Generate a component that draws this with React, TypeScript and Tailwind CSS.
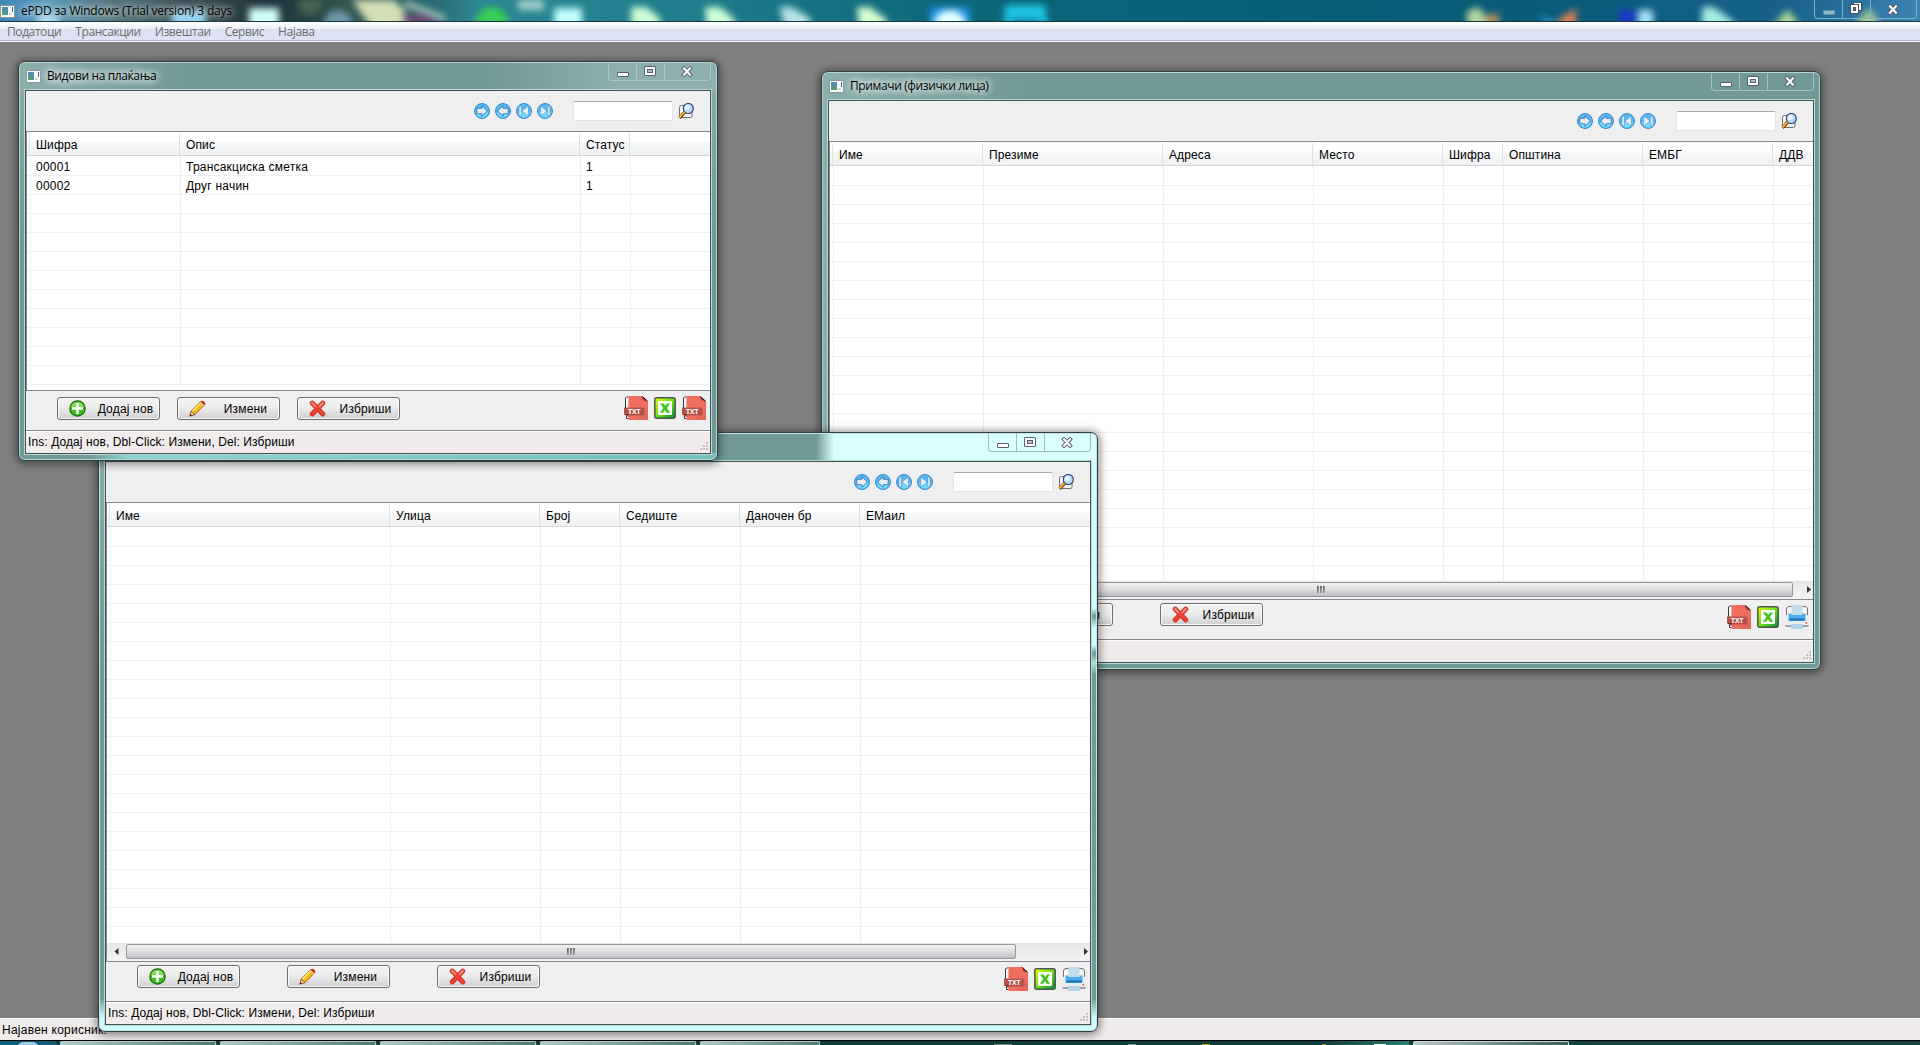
import type { ReactNode } from "react";

type Column = { label: string; width: string };

const TITLE_FONT = "font-['Open_Sans','Noto_Sans',sans-serif]";
const UI_FONT = "font-['Liberation_Sans',Arial,sans-serif]";

function AppIcon() {
  return (
    <svg width="15" height="13" viewBox="0 0 15 13" className="shrink-0">
      <rect x=".5" y=".5" width="14" height="12" fill="#fbfbfb" stroke="#8f979b" />
      <rect x="2" y="2" width="6" height="8" fill="#4f8fa8" />
      <path d="M2 10V5l6 5z" fill="#57a06a" />
      <rect x="9" y="8" width="3" height="2" fill="#cfd2d6" />
      <rect x="12" y="2" width="1" height="5" fill="#2a5f9a" />
    </svg>
  );
}

function MinimizeGlyph({ faded }: { faded?: boolean }) {
  return (
    <svg width="12" height="5" viewBox="0 0 12 5" className="mt-1.5">
      <rect x=".5" y=".5" width="11" height="4" rx=".5" fill={faded ? "#8fb9c6" : "#fff"} stroke={faded ? "#5f93a5" : "#575d6b"} />
    </svg>
  );
}

function MaximizeGlyph() {
  return (
    <svg width="12" height="10" viewBox="0 0 12 10" className="-ml-px">
      <rect x=".5" y=".5" width="11" height="9" rx=".5" fill="#fff" stroke="#575d6b" />
      <rect x="3.5" y="3.5" width="5" height="3" fill="#a9c4c4" stroke="#575d6b" />
    </svg>
  );
}

function RestoreGlyph() {
  return (
    <svg width="12" height="12" viewBox="0 0 12 12" className="-mt-[3px] -ml-[2px]">
      <rect x="3.5" y=".5" width="8" height="8" fill="#fff" stroke="#474f60" />
      <rect x=".5" y="2.5" width="8" height="9" fill="#fff" stroke="#474f60" />
      <rect x="3.5" y="5.5" width="2" height="3" fill="#4f8aa8" stroke="#474f60" />
    </svg>
  );
}

function CloseGlyph() {
  return (
    <svg width="12" height="11" viewBox="0 0 12 11" className="-ml-px">
      <path d="M3 2.300l6 6.400M9 2.300l-6 6.400" stroke="#575d6b" strokeWidth="4" strokeLinecap="square" />
      <path d="M3 2.300l6 6.400M9 2.300l-6 6.400" stroke="#fff" strokeWidth="2.1" strokeLinecap="square" />
    </svg>
  );
}

function CaptionButtons({ tone, restore }: { tone: string; restore?: boolean }) {
  return (
    <div className={`flex h-[19px] w-[103px] rounded-b-[4px] border border-t-0 ${tone}`}>
      <div className={`flex w-7 items-center justify-center border-r ${tone}`}>
        <MinimizeGlyph faded={restore} />
      </div>
      <div className={`flex w-7 items-center justify-center border-r ${tone}`}>
        {restore ? <RestoreGlyph /> : <MaximizeGlyph />}
      </div>
      <div className="flex flex-1 items-center justify-center">
        <CloseGlyph />
      </div>
    </div>
  );
}

function NavIcon({ kind }: { kind: "next" | "prev" | "first" | "last" }) {
  const flip = kind === "prev" || kind === "first";
  return (
    <svg width="16" height="16" viewBox="0 0 16 16">
      <circle cx="8" cy="8" r="7.5" fill="#58b8f0" stroke="#3a8ad2" strokeWidth="1" />
      <path d="M2 9a6 5.6 0 0 0 12 0z" fill="#6fdcff" />
      <g transform={flip ? "translate(16 0) scale(-1 1)" : undefined}>
        {kind === "next" || kind === "prev" ? (
          <path d="M2.800 5.300h5V2.800L13.400 8l-5.600 5.200v-2.500h-5z" fill="#e9edf1" stroke="#2a68b4" strokeWidth=".8" />
        ) : (
          <g fill="#e9edf1" stroke="#4a92d4" strokeWidth=".6">
            <path d="M3.600 3L10.200 8l-6.600 5z" />
            <path d="M10.600 3.200h2.400v9.600h-2.400z" />
          </g>
        )}
      </g>
    </svg>
  );
}

function SearchIcon() {
  return (
    <svg width="16" height="16" viewBox="0 0 16 16">
      <path d="M3.500 2.500H12q2 0 2 2V13q0 1.500-1.500 1.500h-9Q1.500 14.500 1.500 12.500v-8q0-2 2-2z" fill="#f4f4f4" stroke="#707070" />
      <circle cx="10.300" cy="5.500" r="5" fill="#b4d9f8" stroke="#29406f" strokeWidth="1.100" />
      <circle cx="9.400" cy="4.400" r="2.600" fill="#e6f5ff" />
      <path d="M6.800 9.200L1.500 14.800" stroke="#6b3c10" strokeWidth="3.200" />
      <path d="M6.600 9L1.400 14.400" stroke="#ffb53a" strokeWidth="1.800" />
    </svg>
  );
}

function AddIcon() {
  return (
    <svg width="17" height="17" viewBox="0 0 17 17">
      <circle cx="8.5" cy="8.5" r="7.7" fill="#3dbb18" stroke="#1d6a10" strokeWidth="1.2" />
      <path d="M2.2 7a6.4 6 0 0 1 12.6 0q-6 3-12.6 0z" fill="#7fdc5a" />
      <path d="M7.200 3h2.600v4.200H14v2.600H9.800V14H7.200V9.800H3V7.200h4.200z" fill="#fff" />
    </svg>
  );
}

function EditIcon() {
  return (
    <svg width="17" height="17" viewBox="0 0 17 17">
      <path d="M1 16l1.3-5L12 1.3l3.7 3.4L6 14.5z" fill="#f7b912" stroke="#9a5a0c" strokeWidth=".9" />
      <path d="M3.4 11.4L11.8 3" stroke="#ffe96a" strokeWidth="1.6" />
      <path d="M11 2.3l3.6 3.6 1-1-3.5-3.6z" fill="#d5d8dc" />
      <path d="M12.1 1.2Q13.4.2 15 1.4t1.2 3l-.9.8-3.8-3.4z" fill="#cf2b1c" />
      <path d="M1 16l1.2-4.6 1.6.6.6 1.6 1.7.8z" fill="#f6dcae" stroke="#7a2f10" strokeWidth=".6" />
      <path d="M.8 16.3l.6-2.3 1.7 1.5z" fill="#4a1a08" />
    </svg>
  );
}

function DeleteIcon() {
  return (
    <svg width="17" height="17" viewBox="0 0 17 17">
      <path d="M3.2 3l10.6 11M13.8 3L3.2 14" stroke="#c1281e" strokeWidth="4.8" strokeLinecap="round" />
      <path d="M3.2 3l10.6 11M13.8 3L3.2 14" stroke="#ee4136" strokeWidth="3.4" strokeLinecap="round" />
      <path d="M3 2.8l3.2 3.3M13.8 2.8l-3 3.2" stroke="#f68a7c" strokeWidth="2" strokeLinecap="round" />
    </svg>
  );
}

function TxtIcon() {
  return (
    <svg width="24" height="24" viewBox="0 0 24 24">
      <path d="M4.5 1H2.500Q1.500 1.500 1.500 3v9M2.500 20v2.500h2" fill="#fff" stroke="#333" />
      <path d="M4.500 0H18l6 5.500V24H4.500z" fill="#ef6e5f" />
      <path d="M12 24l12-12v12z" fill="#dc6456" opacity=".6" />
      <path d="M18 0l6 5.500-5-1.200z" fill="#9c3a32" />
      <path d="M18.500.5l5 4.700" stroke="#111" strokeWidth="1" />
      <path d="M0 11.500h19q1.500 0 1.500 1.500v5q0 1.500-1.500 1.500H2L0 18z" fill="#b4524a" />
      <path d="M0 18h4.500v3z" fill="#7f2f2a" />
      <text x="4" y="18.300" fontSize="7.4" fontWeight="700" fill="#fff" fontFamily="'Open Sans',sans-serif" textLength="12.5" lengthAdjust="spacingAndGlyphs">TXT</text>
    </svg>
  );
}

function ExcelIcon() {
  return (
    <svg width="22" height="22" viewBox="0 0 22 22">
      <defs>
        <linearGradient id="xl" x1="0" y1="0" x2="1" y2="1">
          <stop offset="0" stopColor="#e6ff00" />
          <stop offset=".55" stopColor="#5fdc14" />
          <stop offset="1" stopColor="#008a3a" />
        </linearGradient>
      </defs>
      <rect x=".8" y=".8" width="20.4" height="20.4" rx="2" fill="url(#xl)" stroke="#4d5650" strokeWidth="1.5" />
      <rect x="4" y="4" width="14" height="14" rx="1" fill="#fff" />
      <path d="M6 6.500h3.600L11.200 9l1.900-2.500H16L12.800 11l3.400 4.800h-3.600L10.900 13 9 15.800H6L9.300 11z" fill="#3fc41c" />
    </svg>
  );
}

function PrinterIcon() {
  return (
    <svg width="24" height="24" viewBox="0 0 24 24">
      <path d="M1.500 10V4Q2 1.500 4 1.500h16q2 0 2.500 2.500v6" fill="#f6f6f6" stroke="#6a6e72" />
      <path d="M3 9h18l3 5.500V20q0 1.500-2 1.500H2Q0 21.500 0 20v-5.500z" fill="#e9edf0" />
      <path d="M0 20h24q0 2-2 2H2q-2 0-2-2z" fill="#9aa3ab" />
      <path d="M3.500 8.500h17V15q0 1-1 1h-15q-1 0-1-1z" fill="#4cabe8" />
      <path d="M4.500 13.500h15V15.500h-15z" fill="#1a70b8" />
      <path d="M6.500 0h11v10h-11z" fill="#c2dcec" />
      <path d="M6 19h12v5H6z" fill="#b4d4e8" />
      <path d="M20.500 17h1.500v1.800h-1.500z" fill="#f05a28" />
    </svg>
  );
}

const pushButtonClass =
  "flex h-[23px] w-[103px] items-center rounded-[3px] border border-[#707070] bg-linear-to-b from-[#f3f3f3] from-0% via-[#ebebeb] via-50% to-[#cfcfcf] pl-[11px] shadow-[inset_0_0_0_1px_#fafafa]";

function PushButton({ icon, label }: { icon: ReactNode; label: string }) {
  return (
    <div className={pushButtonClass}>
      {icon}
      <span className="flex-1 pl-[6px] text-center tracking-[0.18px] whitespace-nowrap">{label}</span>
    </div>
  );
}

function SizeGrip() {
  return (
    <svg width="9" height="9" viewBox="0 0 9 9" fill="#c4c0bf">
      <path d="M6 0h2v2H6zM3 3h2v2H3zM6 3h2v2H6zM0 6h2v2H0zM3 6h2v2H3zM6 6h2v2H6z" />
    </svg>
  );
}

function Scrollbar({ thumb }: { thumb: string }) {
  return (
    <div className="flex h-[18px] shrink-0 items-start border-t border-[#e3e3e3] bg-linear-to-b from-[#e8e8e8] to-[#f3f3f3]">
      <div className="flex h-[15px] w-[19px] items-center justify-center">
        <svg width="5" height="7" viewBox="0 0 5 7"><path d="M4.500 0v7L.5 3.500z" fill="#333" /></svg>
      </div>
      <div className={`flex h-[15px] items-center justify-center gap-px rounded-[2px] border border-[#979797] bg-linear-to-b from-[#f1f1f2] from-0% via-[#dedee0] via-50% to-[#bfc0c6] ${thumb}`}>
        <i className="h-[7px] w-[2px] bg-linear-to-br from-[#555] to-[#bbb]" />
        <i className="h-[7px] w-[2px] bg-linear-to-br from-[#555] to-[#bbb]" />
        <i className="h-[7px] w-[2px] bg-linear-to-br from-[#555] to-[#bbb]" />
      </div>
      <div className="flex h-[15px] flex-1 items-center justify-end pr-[2px]">
        <svg width="4" height="7" viewBox="0 0 4 7"><path d="M0 0v7l4-3.500z" fill="#333" /></svg>
      </div>
    </div>
  );
}

function DataGrid({ columns, rows, rowCount, scrollbar }: { columns: Column[]; rows: string[][]; rowCount: number; scrollbar?: ReactNode }) {
  const lines = Array.from({ length: rowCount }, (_, i) => i);
  return (
    <div className="flex min-h-0 flex-1 flex-col overflow-hidden border-y border-l border-[#828790] bg-white">
      <div className="flex h-6 shrink-0 border-b border-[#d5d5d5] bg-linear-to-b from-white from-40% via-[#f7f8fa] via-45% to-[#f0f1f3] pt-px">
        <div className="w-[3px] shrink-0 border-r border-[#e2e3e6]" />
        {columns.map((c) => (
          <div key={c.label} className={`flex items-center overflow-hidden border-[#dfe0e3] pt-[2px] pl-[6px] tracking-[0.12px] whitespace-nowrap ${c.width}`}>
            {c.label}
          </div>
        ))}
      </div>
      <div className="flex min-h-0 flex-1 flex-col overflow-hidden">
        {lines.map((i) => (
          <div key={i} className="flex h-[19px] shrink-0 border-b border-[#efefef] first:h-5">
            <div className="w-1 shrink-0 border-r border-[#efefef]" />
            {columns.map((c, j) => (
              <div key={c.label} className={`flex items-center overflow-hidden border-[#efefef] pt-[2px] pl-[5px] tracking-[0.22px] whitespace-nowrap ${c.width}`}>
                {rows[i]?.[j]}
              </div>
            ))}
          </div>
        ))}
      </div>
      {scrollbar}
    </div>
  );
}

type WindowProps = {
  place: string;
  glass: string;
  edge: string;
  captionTone: string;
  title?: string;
  columns: Column[];
  rows?: string[][];
  rowCount: number;
  scrollbar?: ReactNode;
  buttonRow: string;
  lastIcon: ReactNode;
};

function ChildWindow(p: WindowProps) {
  return (
    <section className={`absolute flex flex-col rounded-[7px] border border-[#2f403f] p-[6px] pt-0 ${p.place} ${p.glass} ${p.edge}`}>
      <header className="flex h-7 shrink-0 items-start justify-between">
        <div className={`flex items-center gap-[6px] pt-1.5 pl-px text-[12px] leading-[16px] text-black [text-shadow:0_0_8px_#fff,0_0_8px_#fff,0_0_12px_#ffffffb0] ${TITLE_FONT}`}>
          {p.title && <AppIcon />}
          <span className="tracking-[-0.38px] whitespace-nowrap">{p.title}</span>
        </div>
        <CaptionButtons tone={p.captionTone} />
      </header>
      <div className="flex min-h-0 flex-1 flex-col border border-[#3f5453] bg-[#efefef] shadow-[0_0_0_1px_#bcd6d5]">
        <div className="flex h-10 shrink-0 items-start justify-end pt-3">
          <div className="flex gap-[5px]">
            <NavIcon kind="next" />
            <NavIcon kind="prev" />
            <NavIcon kind="first" />
            <NavIcon kind="last" />
          </div>
          <div className="-mt-[2px] mr-[5px] ml-5 h-5 w-[100px] rounded-[2px] border border-[#e2e3ea] border-t-[#abadb3] bg-white" />
          <div className="mr-4"><SearchIcon /></div>
        </div>
        <DataGrid columns={p.columns} rows={p.rows ?? []} rowCount={p.rowCount} scrollbar={p.scrollbar} />
        <div className="flex h-[39px] shrink-0 justify-between">
          <div className={`flex ${p.buttonRow}`}>
            <PushButton icon={<AddIcon />} label="Додај нов" />
            <PushButton icon={<EditIcon />} label="Измени" />
            <PushButton icon={<DeleteIcon />} label="Избриши" />
          </div>
          <div className="flex items-start gap-[6px] pt-[5px] pr-1">
            <TxtIcon />
            <div className="pt-px"><ExcelIcon /></div>
            {p.lastIcon}
          </div>
        </div>
        <footer className="flex h-[23px] shrink-0 items-center justify-between border-t border-[#828790] bg-[#f0eceb] pl-[2px] shadow-[inset_0_1px_0_#fff]">
          <span className="tracking-[0.09px] whitespace-nowrap">Ins: Додај нов, Dbl-Click: Измени, Del: Избриши</span>
          <span className="mt-auto pr-px pb-[2px]"><SizeGrip /></span>
        </footer>
      </div>
    </section>
  );
}

function DesktopThroughGlass() {
  return (
    <div className="absolute inset-x-0 top-0 h-[21px] overflow-hidden bg-[linear-gradient(to_right,#3f87b8_0%,#5d9cbc_2.5%,#567880_5.5%,#334347_11.5%,#1d343b_14%,#33544f_18%,#2b6a70_22.5%,#2d8794_25%,#1f7d8c_36%,#0c6678_50%,#086078_66%,#0a5a78_80%,#17618a_93%,#3b83b4_100%)]">
      <svg width="1920" height="40" viewBox="0 0 1920 40" className="blur-[3.5px]">
        <rect x="38" y="14" width="20" height="18" fill="#a9dcee" />
        <rect x="172" y="10" width="34" height="24" fill="#8fd0ec" />
        <rect x="249" y="8" width="30" height="28" fill="#d2fffa" />
        <circle cx="310" cy="2" r="12" fill="#4c6652" />
        <circle cx="338" cy="24" r="14" fill="#6d98a8" />
        <path d="M352 0h42l12 12v22h-30z" fill="#d3e0b6" />
        <path d="M402 14h24l14 9v8h-32z" fill="#6b4672" />
        <path d="M405 3l40 16" stroke="#b9d9c8" strokeWidth="5" />
        <circle cx="492" cy="23" r="16" fill="#37cf55" />
        <rect x="518" y="-10" width="26" height="20" fill="#a7d3cc" />
        <rect x="554" y="8" width="28" height="28" fill="#c2ffff" />
        <path d="M631 7h15l14 11v18h-28zM705 7h15l15 13v16h-27z" fill="#cfffd6" />
        <path d="M779 7h13l18 11v18h-22z" fill="#b9e4e6" />
        <path d="M857 7h13l17 13v16h-27z" fill="#d4ffd0" />
        <rect x="930" y="7" width="40" height="28" fill="#1e93e8" />
        <ellipse cx="950" cy="25" rx="16" ry="15" fill="#e4ffff" />
        <path d="M1005 5h40l3 24h-44z" fill="#1dc6e4" />
        <path d="M1012 19h28v14h-30z" fill="#0b7a96" />
        <path d="M1467 11l12-4 10 15v12h-22z" fill="#b4d49c" />
        <rect x="1486" y="14" width="13" height="18" fill="#b88c58" />
        <path d="M1536 14l20 8v10z" fill="#2ba0d8" />
        <path d="M1576 8v26h-18v-14z" fill="#dc8150" />
        <rect x="1619" y="10" width="17" height="26" fill="#1838c4" />
        <rect x="1638" y="10" width="15" height="26" fill="#a5e2fa" />
        <path d="M1702 7h12l20 15v12h-32z" fill="#a5ece2" />
        <path d="M1788 9l10 14v12h-23v-12z" fill="#a9d68e" />
        <path d="M1870 8l9 15v12h-23v-12z" fill="#aed08c" />
      </svg>
    </div>
  );
}

const paymentColumns: Column[] = [
  { label: "Шифра", width: "w-[150px] shrink-0 border-r" },
  { label: "Опис", width: "w-[400px] shrink-0 border-r" },
  { label: "Статус", width: "w-[50px] shrink-0 border-r" },
];

const recipientColumns: Column[] = [
  { label: "Име", width: "w-[150px] shrink-0 border-r" },
  { label: "Презиме", width: "w-[180px] shrink-0 border-r" },
  { label: "Адреса", width: "w-[150px] shrink-0 border-r" },
  { label: "Место", width: "w-[130px] shrink-0 border-r" },
  { label: "Шифра", width: "w-[60px] shrink-0 border-r" },
  { label: "Општина", width: "w-[140px] shrink-0 border-r" },
  { label: "ЕМБГ", width: "w-[130px] shrink-0 border-r" },
  { label: "ДДВ", width: "flex-1" },
];

const companyColumns: Column[] = [
  { label: "Име", width: "w-[280px] shrink-0 border-r" },
  { label: "Улица", width: "w-[150px] shrink-0 border-r" },
  { label: "Број", width: "w-[80px] shrink-0 border-r" },
  { label: "Седиште", width: "w-[120px] shrink-0 border-r" },
  { label: "Даночен бр", width: "w-[120px] shrink-0 border-r" },
  { label: "ЕМаил", width: "flex-1" },
];

const taskButton = "h-full rounded-t-[2px] border border-b-0 border-[#b8d0cc] bg-linear-to-r from-[#b4ccc8] to-[#4c7d76]";

export default function App() {
  return (
    <div className={`relative flex h-[1045px] w-[1920px] flex-col overflow-hidden bg-[#808080] text-[12px] leading-[14px] text-black ${UI_FONT}`}>
      <div className="relative flex h-[22px] shrink-0 items-start justify-between border-b border-[#173640]">
        <DesktopThroughGlass />
        <div className={`relative flex items-center gap-[6px] pt-[3px] text-[12px] leading-[16px] [text-shadow:0_0_7px_#ffffffc0,0_0_7px_#ffffffc0] ${TITLE_FONT}`}>
          <AppIcon />
          <span className="tracking-[-0.2px] whitespace-nowrap">ePDD за Windows (Trial version) 3 days</span>
        </div>
        <div className="relative mr-[3px]">
          <CaptionButtons restore tone="border-[#7fb0c4]" />
        </div>
      </div>
      <nav className={`flex h-5 shrink-0 items-center gap-[14px] border-b border-[#f4f4f8] bg-linear-to-b from-white from-0% via-[#eef0f8] via-35% to-[#dde2f4] to-36% pt-px pl-[7px] text-[12px] tracking-[-0.41px] text-[#6d6d6d] shadow-[inset_0_-1px_0_#b4bcd2] ${TITLE_FONT}`}>
        <span>Податоци</span>
        <span>Трансакции</span>
        <span>Извештаи</span>
        <span>Сервис</span>
        <span>Најава</span>
      </nav>
      <main className="min-h-0 flex-1" />
      <div className="flex h-[22px] shrink-0 items-center border-t border-white bg-[#f0eceb] pl-[2px] tracking-[0.25px]">Најавен корисник:</div>
      <div className="flex h-[5px] shrink-0 gap-1 border-t border-black bg-[#153f3d]">
        <div className="flex w-14 justify-center overflow-hidden bg-[#135a78]"><i className="mt-px h-4 w-6 shrink-0 rounded-full bg-[#a9c8dc]" /></div>
        <div className={`w-[156px] ${taskButton}`} />
        <div className={`w-[156px] ${taskButton}`} />
        <div className={`w-[156px] ${taskButton}`} />
        <div className={`w-[156px] ${taskButton}`} />
        <div className={`w-[120px] ${taskButton}`} />
        <div className="flex flex-1 items-end bg-linear-to-r from-[#123c3a] via-[#123c3a] via-85% to-[#2f7f74]">
          <i className="ml-[170px] h-px w-[18px] bg-[#7c8a8a]" />
          <i className="ml-[116px] h-px w-2 bg-[#8a9898]" />
          <i className="ml-[66px] h-px w-2 bg-[#b8a818]" />
          <i className="ml-[112px] h-px w-1 bg-[#a89818]" />
          <i className="ml-[48px] h-px w-3 bg-white" />
        </div>
        <div className="h-full w-[156px] rounded-t-[2px] border border-b-0 border-[#c8dcd8] bg-linear-to-r from-[#b8c8c8] to-[#3a5c5a]" />
        <div className="w-[347px] bg-[#124340]" />
      </div>

      <ChildWindow
        place="left-[821px] top-[71px] h-[599px] w-[1000px]"
        glass="bg-linear-to-r from-[#8caeae] from-0% via-[#719997] via-20% to-[#719997]"
        edge="shadow-[inset_0_0_0_1px_#b9d3d2,0_1px_8px_2px_rgba(0,0,0,0.45)]"
        captionTone="border-[#b4cccb]/80"
        title="Примачи (физички лица)"
        columns={recipientColumns}
        rowCount={22}
        scrollbar={<Scrollbar thumb="w-[944px]" />}
        buttonRow="gap-[47px] pt-[3px] pl-[31px]"
        lastIcon={<PrinterIcon />}
      />
      <ChildWindow
        place="left-[98px] top-[432px] h-[600px] w-[1000px]"
        glass="bg-[linear-gradient(to_right,#719997_0,#719997_717px,#d9ffff_735px,#d9ffff_100%),linear-gradient(to_bottom,#8dafae_0,#719997_240px,#719997_565px,#cdfdfd_585px),linear-gradient(to_bottom,#d0ffff_0,#d0ffff_175px,#719997_183px,#d0ffff_195px,#d0ffff_212px,#719997_220px,#b0e0de_230px,#719997_242px,#719997_565px,#cdfdfd_585px)] bg-[length:100%_29px,8px_100%,100%_100%] bg-no-repeat"
        edge="shadow-[inset_0_0_0_1px_#c6e6e4,0_1px_8px_2px_rgba(0,0,0,0.45)]"
        captionTone="border-[#9fb9b9]"
        columns={companyColumns}
        rowCount={22}
        scrollbar={<Scrollbar thumb="w-[890px]" />}
        buttonRow="gap-[47px] pt-[3px] pl-[31px]"
        lastIcon={<PrinterIcon />}
      />
      <ChildWindow
        place="left-[18px] top-[61px] h-[400px] w-[700px]"
        glass="bg-[linear-gradient(to_right,#8dafae_0,#719997_160px,#719997_470px,#8dafae_600px,#8dafae_100%),linear-gradient(to_right,#719997_70px,#8bd3d1_110px,#73c0be_100%),linear-gradient(to_bottom,#8dafae,#719997_45%)] bg-[length:100%_29px,100%_7px,100%_100%] bg-[position:top,bottom,top] bg-no-repeat"
        edge="shadow-[inset_0_0_0_1px_#b9d3d2,0_1px_8px_2px_rgba(0,0,0,0.45)]"
        captionTone="border-[#b4cccb]/80"
        title="Видови на плаќања"
        columns={paymentColumns}
        rows={[
          ["00001", "Трансакциска сметка", "1"],
          ["00002", "Друг начин", "1"],
        ]}
        rowCount={12}
        buttonRow="gap-[17px] pt-[6px] pl-[31px]"
        lastIcon={<TxtIcon />}
      />
    </div>
  );
}
